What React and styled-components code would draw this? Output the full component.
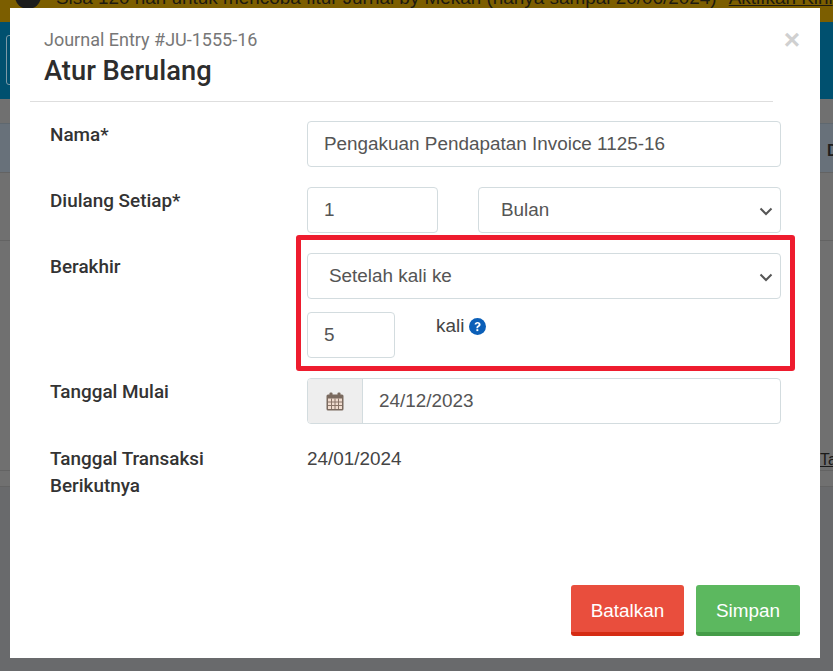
import React from 'react';
import styled, { createGlobalStyle } from 'styled-components';

const Global = createGlobalStyle`
  html, body { margin: 0; padding: 0; height: 100%; }
  body { width: 833px; height: 671px; overflow: hidden; background: #6f7072; font-family: "Liberation Sans", Arial, sans-serif; }
  * { box-sizing: border-box; }
`;

const Page = styled.div`
  position: relative;
  width: 833px;
  height: 671px;
  overflow: hidden;
  display: flex;
  flex-direction: column;
`;
const Banner = styled.div`
  height: 22px;
  background: #7c5e00;
  color: #1d1a10;
  font-size: 18.9px;
  line-height: 22px;
  padding: 0 0 0 15px;
  white-space: nowrap;
  overflow: hidden;
  flex: none;
  display: flex;
  gap: 15px;
  align-items: flex-start;
`;
const BannerIcon = styled.span`
  width: 26px;
  height: 26px;
  flex: none;
  margin-top: -17px;
  border-radius: 50%;
  background: #1c1c1c;
`;
const BannerText = styled.div`
  margin-top: -13px;
  & u { margin-left: 7px; }
`;
const Header = styled.div`
  height: 77px;
  background: #00506f;
  flex: none;
  padding: 13px 0 0 6px;
`;
const HeaderField = styled.div`
  width: 40px;
  height: 50px;
  border: 1px solid #7d99a6;
  border-radius: 3px;
`;
const Rest = styled.div`
  flex: 1;
  background: #707070;
  display: flex;
  flex-direction: column;
`;
const SubHead = styled.div`
  height: 50px;
  margin-top: 24px;
  padding-left: 827px;
  background: #68717a;
  border-top: 1px solid #5f686f;
  border-bottom: 1px solid #636363;
  color: #1f1f1f;
  font: 700 16px/54px "Liberation Sans", sans-serif;
  overflow: hidden;
  white-space: nowrap;
`;
const BgRow = styled.div`
  height: ${p => p.$h}px;
  border-bottom: 1px solid #636363;
  flex: none;
`;
const BgLink = styled(BgRow)`
  padding-left: 820px;
  color: #1a1a1a;
  font: 16px/438px "Liberation Sans", sans-serif;
  text-decoration: underline;
  overflow: hidden;
  white-space: nowrap;
`;
const BgFoot = styled.div`
  flex: 1;
  background: #696a6c;
`;

const Modal = styled.div`
  position: absolute;
  left: 10px;
  top: 8px;
  width: 810px;
  height: 650px;
  background: #fff;
  display: flex;
  flex-direction: column;
`;
const ModalHeader = styled.header`
  position: relative;
  margin: 0 47px 0 20px;
  padding: 21px 0 0 14px;
  height: 94px;
  border-bottom: 1px solid #dedede;
  font-family: Roboto, sans-serif;
`;
const Sub = styled.div`
  font-size: 18px;
  line-height: 22px;
  color: #777;
`;
const Title = styled.h4`
  margin: 4px 0 0;
  font-size: 27.3px;
  line-height: 32px;
  font-weight: 500;
  color: #2d2d2d;
`;
const Close = styled.span`
  position: absolute;
  right: -27px;
  top: 18px;
  font: 700 28px/28px "Liberation Sans", sans-serif;
  color: #d0d0d0;
`;
const Form = styled.div`
  padding: 19px 39px 0 40px;
  display: flex;
  flex-direction: column;
`;
const Row = styled.div`
  display: grid;
  grid-template-columns: 257px 474px;
  margin-bottom: 20px;
`;
const Label = styled.label`
  font: 500 18.9px/27px Roboto, sans-serif;
  color: #333;
  padding-top: ${p => p.$pt ?? 0}px;
`;
const FieldCol = styled.div`
  position: relative;
  display: flex;
  flex-direction: column;
  gap: 13px;
`;
const Inline = styled.div`
  display: flex;
  align-items: flex-start;
  gap: ${p => p.$gap ?? 0}px;
`;
const Input = styled.div`
  height: 46px;
  width: ${p => p.$w ? p.$w + 'px' : '100%'};
  border: 1px solid #d3dcdf;
  border-radius: 4px;
  background: #fff;
  padding: 0 16px;
  font-size: 18.9px;
  line-height: 44px;
  color: #555;
  flex: ${p => p.$w ? 'none' : 1};
`;
const Select = styled(Input)`
  position: relative;
  padding-left: ${p => p.$pl ?? 21}px;
  & svg { position: absolute; right: 7px; top: 16px; }
`;
const Chevron = () => (
  <svg width="14" height="14" viewBox="0 0 14 14" fill="none">
    <path d="M1.5 4.5 L7 10 L12.5 4.5" stroke="#555" strokeWidth="2" />
  </svg>
);
const Kali = styled.span`
  margin-left: 41px;
  padding-top: 2px;
  font: 18.9px/24px "Liberation Sans", sans-serif;
  color: #444;
  display: inline-flex;
  align-items: center;
  gap: 5px;
`;
const Help = styled.svg`
  width: 17px;
  height: 17px;
`;
const InputGroup = styled.div`
  display: flex;
  height: 46px;
  border: 1px solid #d3dcdf;
  border-radius: 4px;
  overflow: hidden;
`;
const Addon = styled.div`
  width: 55px;
  flex: none;
  background: #eee;
  border-right: 1px solid #d3dcdf;
  display: flex;
  align-items: center;
  justify-content: center;
`;
const GroupValue = styled.div`
  padding-left: 16px;
  font-size: 18.9px;
  line-height: 44px;
  color: #555;
`;
const Plain = styled.div`
  font-size: 18.9px;
  line-height: 24px;
  color: #444;
  margin-top: 3px;
`;
const Annotation = styled.div`
  position: absolute;
  left: -11px;
  right: -14px;
  top: -18px;
  bottom: -13px;
  border: 5px solid #ee1c2e;
  border-radius: 3px;
  pointer-events: none;
`;
const Footer = styled.footer`
  margin-top: auto;
  padding: 0 20px 22px 0;
  display: flex;
  justify-content: flex-end;
  gap: 12px;
`;
const Button = styled.button`
  height: 51px;
  width: ${p => p.$w}px;
  border: 0;
  border-bottom: 4px solid ${p => p.$dark};
  border-radius: 3px;
  background: ${p => p.$bg};
  color: #fff;
  font: 18.9px "Liberation Sans", sans-serif;
  padding: 4px 0 0;
`;

export default function App() {
  return (
    <Page>
      <Global />
      <Banner>
        <BannerIcon />
        <BannerText>
          Sisa 120 hari untuk mencoba fitur Jurnal by Mekari (hanya sampai 20/06/2024) <u>Aktifkan Kini</u>
        </BannerText>
      </Banner>
      <Header><HeaderField /></Header>
      <Rest>
        <SubHead>D</SubHead>
        <BgRow $h={68} />
        <BgLink $h={230}>Tag</BgLink>
        <BgRow $h={16} />
        <BgFoot />
      </Rest>
      <Modal>
        <ModalHeader>
          <Sub>Journal Entry #JU-1555-16</Sub>
          <Title>Atur Berulang</Title>
          <Close>×</Close>
        </ModalHeader>
        <Form>
          <Row>
            <Label>Nama*</Label>
            <Input>Pengakuan Pendapatan Invoice 1125-16</Input>
          </Row>
          <Row>
            <Label>Diulang Setiap*</Label>
            <Inline $gap={40}>
              <Input $w={131}>1</Input>
              <Select $w={303} $pl={22}>Bulan<Chevron /></Select>
            </Inline>
          </Row>
          <Row>
            <Label>Berakhir</Label>
            <FieldCol>
              <Select>Setelah kali ke<Chevron /></Select>
              <Inline>
                <Input $w={88}>5</Input>
                <Kali>
                  kali
                  <Help viewBox="0 0 17 17">
                    <circle cx="8.5" cy="8.5" r="8.5" fill="#0b5fb8" />
                    <path d="M5.6 6.6c0-1.7 1.3-2.7 3-2.7s3 1 3 2.5c0 1.2-.7 1.8-1.6 2.4-.6.4-.8.7-.8 1.2v.3H7.4v-.5c0-.9.4-1.5 1.1-2 .7-.5 1.1-.8 1.1-1.3 0-.6-.4-1-1-1-.7 0-1.1.4-1.2 1.1z" fill="#fff" />
                    <rect x="7.4" y="11.2" width="1.9" height="1.9" fill="#fff" />
                  </Help>
                </Kali>
              </Inline>
              <Annotation />
            </FieldCol>
          </Row>
          <Row>
            <Label>Tanggal Mulai</Label>
            <InputGroup>
              <Addon>
                <svg width="18" height="19" viewBox="0 0 18 19">
                  <rect x="0.5" y="2.5" width="17" height="16" rx="1.5" fill="#7a6a5f" />
                  <rect x="2" y="6.5" width="14" height="10.5" fill="#f0dccf" />
                  <path d="M5.5 6.5V17M9 6.5V17M12.5 6.5V17M2 10h14M2 13.5h14" stroke="#8a7568" strokeWidth="1" />
                  <rect x="3.5" y="0.5" width="3" height="4.5" rx="1" fill="#7a6a5f" />
                  <rect x="11.5" y="0.5" width="3" height="4.5" rx="1" fill="#7a6a5f" />
                </svg>
              </Addon>
              <GroupValue>24/12/2023</GroupValue>
            </InputGroup>
          </Row>
          <Row>
            <Label $pt={1}>Tanggal Transaksi<br />Berikutnya</Label>
            <Plain>24/01/2024</Plain>
          </Row>
        </Form>
        <Footer>
          <Button $w={113} $bg="#e94e3d" $dark="#d52b13">Batalkan</Button>
          <Button $w={104} $bg="#5cb85f" $dark="#459c48">Simpan</Button>
        </Footer>
      </Modal>
    </Page>
  );
}
